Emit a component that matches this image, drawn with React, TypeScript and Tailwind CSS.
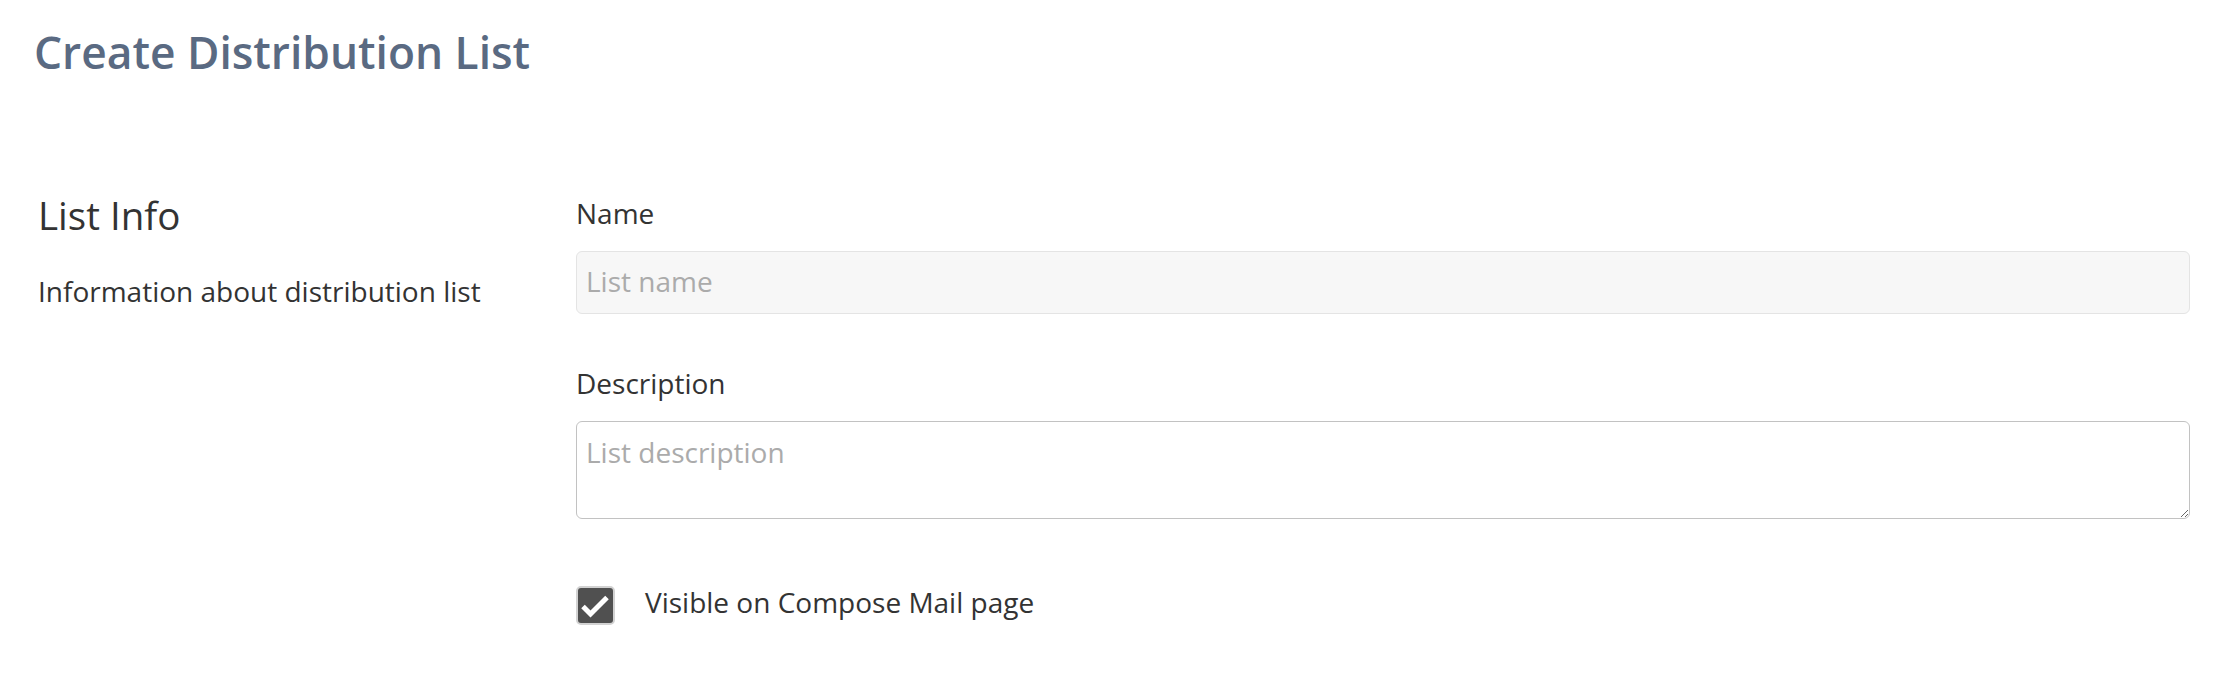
import React from "react";

export default function App() {
  return (
    <div className="min-h-[674px] w-full bg-white pl-[34px] pr-[30px] pt-[30px] text-[#333333] [font-family:'Open_Sans',sans-serif]">
      <h1 className="text-[44.3px] font-semibold leading-none text-[#5a6a82]">Create Distribution List</h1>

      <div className="mt-[122px] flex">
        <div className="w-[542px] shrink-0 pl-[4px]">
          <h2 className="text-[38.5px] font-normal leading-none">List Info</h2>
          <p className="mt-[42px] text-[28px] leading-none">Information about distribution list</p>
        </div>

        <div className="flex flex-1 flex-col pt-[3px]">
          <label className="block text-[28px] leading-none">Name</label>
          <input
            type="text"
            placeholder="List name"
            className="mt-[24px] h-[63px] w-full rounded-[6px] border border-[#e4e4e4] bg-[#f7f7f7] px-[9px] pb-[3px] text-[28px] outline-none placeholder:text-[#ababab]"
          />

          <label className="mt-[55px] block text-[28px] leading-none">Description</label>
          <textarea
            placeholder="List description"
            className="mt-[24px] block h-[98px] w-full rounded-[6px] border border-[#c2c2c2] bg-white px-[9px] pt-[11px] text-[28px] leading-[38px] outline-none placeholder:text-[#ababab]"
          />

          <div className="mt-[67px] flex items-start gap-[30px]">
            <div className="flex h-[39px] w-[39px] shrink-0 items-center justify-center rounded-[5px] border-2 border-[#d2d2d2] bg-[#505050]">
              <svg width="35" height="35" viewBox="0 0 35 35" fill="none">
                <path d="M5 18.5 L12.5 26 L29 9.5" stroke="#ffffff" strokeWidth="5" strokeLinejoin="miter" />
              </svg>
            </div>
            <span className="mt-[2px] text-[28px] leading-none">Visible on Compose Mail page</span>
          </div>
        </div>
      </div>
    </div>
  );
}
